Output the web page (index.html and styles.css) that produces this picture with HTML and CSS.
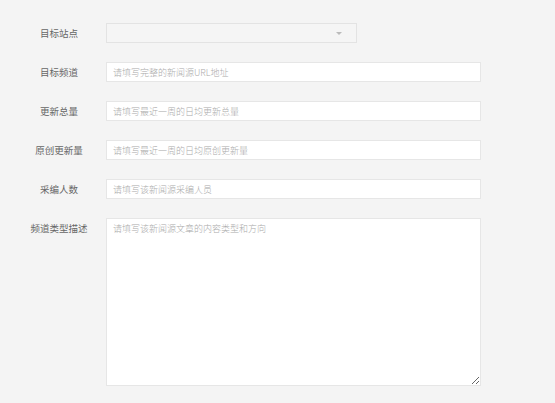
FILE: index.html
```html
<!DOCTYPE html>
<html lang="zh">
<head>
<meta charset="utf-8">
<link rel="stylesheet" href="styles.css">
</head>
<body>
<form class="form">
  <div class="row">
    <label class="label">目标站点</label>
    <div class="select">
      <span class="caret"></span>
    </div>
  </div>
  <div class="row">
    <label class="label">目标频道</label>
    <input class="input" type="text" placeholder="请填写完整的新闻源URL地址">
  </div>
  <div class="row">
    <label class="label">更新总量</label>
    <input class="input" type="text" placeholder="请填写最近一周的日均更新总量">
  </div>
  <div class="row">
    <label class="label">原创更新量</label>
    <input class="input" type="text" placeholder="请填写最近一周的日均原创更新量">
  </div>
  <div class="row">
    <label class="label">采编人数</label>
    <input class="input" type="text" placeholder="请填写该新闻源采编人员">
  </div>
  <div class="row row-top">
    <label class="label">频道类型描述</label>
    <textarea class="textarea" placeholder="请填写该新闻源文章的内容类型和方向"></textarea>
  </div>
</form>
</body>
</html>
```

FILE: styles.css
```css
html, body {
  margin: 0;
  padding: 0;
  background: #f4f4f4;
  font-family: "Noto Sans CJK SC", "Liberation Sans", sans-serif;
}

.form {
  display: flex;
  flex-direction: column;
  gap: 19px;
  padding: 23px 0 0 24px;
}

.row {
  display: flex;
  align-items: center;
  height: 20px;
}

.row-top {
  align-items: flex-start;
  height: auto;
}

.label {
  width: 70px;
  margin-right: 12px;
  text-align: center;
  font-size: 9.5px;
  font-weight: 400;
  color: #666;
  line-height: 20px;
}

.select {
  position: relative;
  width: 249px;
  height: 18px;
  border: 1px solid #e3e3e3;
  background: #f5f5f5;
}

.caret {
  position: absolute;
  right: 14px;
  top: 8px;
  width: 0;
  height: 0;
  border-left: 3px solid transparent;
  border-right: 3px solid transparent;
  border-top: 3px solid #bbb;
}

.input, .textarea {
  box-sizing: border-box;
  width: 375px;
  border: 1px solid #e6e6e6;
  background: #fff;
  font-family: inherit;
  font-size: 9px;
  font-weight: 300;
  color: #555;
  outline: none;
  margin: 0;
}

.input {
  height: 20px;
  padding: 0 6px;
}

.textarea {
  height: 168px;
  padding: 3px 6px;
  resize: vertical;
  line-height: 14px;
}

.input::placeholder, .textarea::placeholder {
  color: #aaa;
}
```
